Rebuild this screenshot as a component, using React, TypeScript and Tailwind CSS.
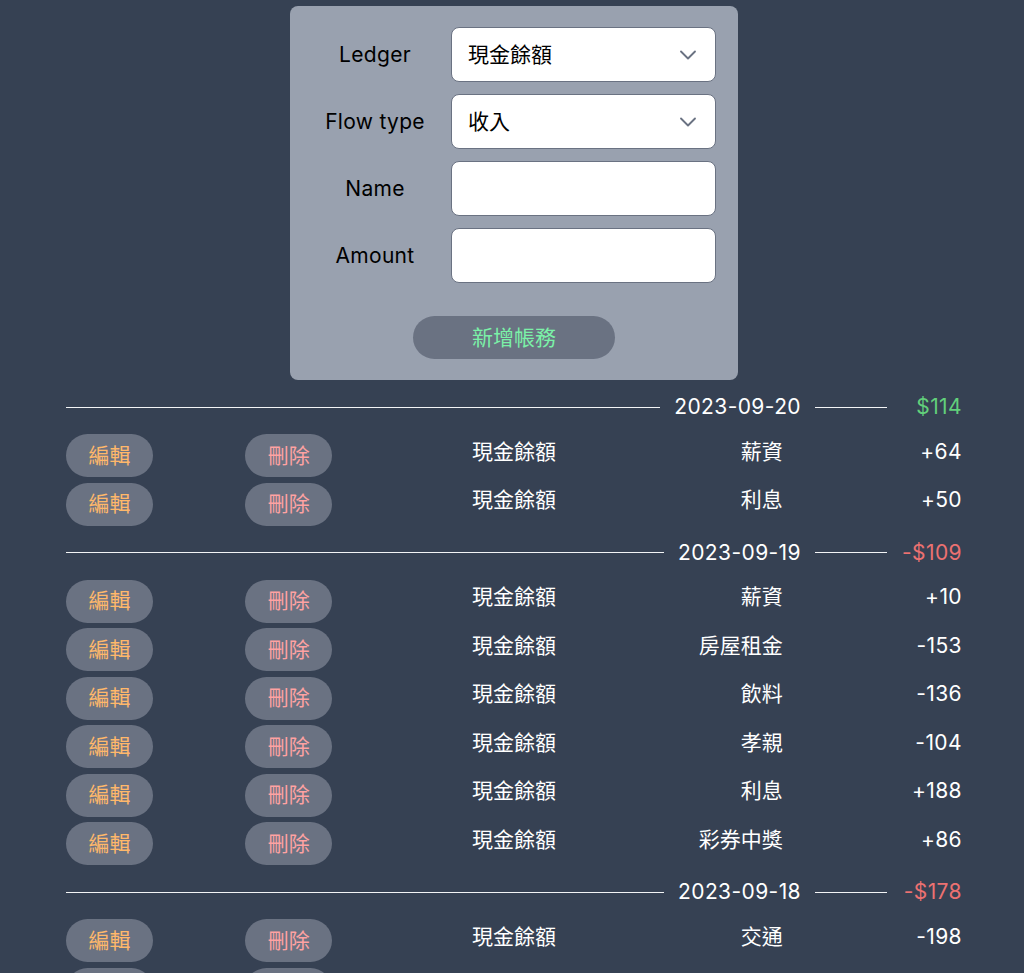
import { ChevronDown } from "lucide-react";

type Entry = { name: string; amount: number };
type Day = { date: string; entries: Entry[] };

const days: Day[] = [
  {
    date: "2023-09-20",
    entries: [
      { name: "薪資", amount: 64 },
      { name: "利息", amount: 50 },
    ],
  },
  {
    date: "2023-09-19",
    entries: [
      { name: "薪資", amount: 10 },
      { name: "房屋租金", amount: -153 },
      { name: "飲料", amount: -136 },
      { name: "孝親", amount: -104 },
      { name: "利息", amount: 188 },
      { name: "彩券中獎", amount: 86 },
    ],
  },
  {
    date: "2023-09-18",
    entries: [
      { name: "交通", amount: -198 },
      { name: "薪資", amount: 20 },
    ],
  },
];

function fmtTotal(n: number) {
  return n < 0 ? `-$${-n}` : `$${n}`;
}

function Select({ value }: { value: string }) {
  return (
    <div className="h-[55px] bg-white border border-gray-500 rounded-lg flex items-center justify-between pl-[16px] pr-[13px]">
      <span className="text-[21px] leading-7 text-black">{value}</span>
      <ChevronDown size={28} strokeWidth={1.6} className="text-gray-500" />
    </div>
  );
}

function Field({ label, children }: { label: string; children: React.ReactNode }) {
  return (
    <>
      <div className="text-[21px] leading-7 text-black text-center flex items-center justify-center h-[55px] tracking-[0.3px]">
        {label}
      </div>
      {children}
    </>
  );
}

export default function App() {
  return (
    <div className="min-h-screen bg-gray-700 pl-[66px] pr-[62px] pt-[6px] pb-10 font-[Inter,'Noto_Sans_CJK_TC',sans-serif]">
      {/* Form */}
      <div className="w-[448px] mx-auto bg-gray-400 rounded-lg pl-5 pr-[22px] pt-[21px] pb-[21px]">
        <div className="grid grid-cols-[130px_265px] gap-x-[11px] gap-y-3">
          <Field label="Ledger">
            <Select value="現金餘額" />
          </Field>
          <Field label="Flow type">
            <Select value="收入" />
          </Field>
          <Field label="Name">
            <input className="h-[55px] bg-white border border-gray-500 rounded-lg px-4 text-xl outline-none" />
          </Field>
          <Field label="Amount">
            <input className="h-[55px] bg-white border border-gray-500 rounded-lg px-4 text-xl outline-none" />
          </Field>
        </div>
        <div className="flex justify-center mt-[33px] pl-[2px]">
          <button className="w-[202px] h-[43px] rounded-full bg-gray-500 text-green-300 text-[21px] leading-7">
            新增帳務
          </button>
        </div>
      </div>

      {/* List */}
      {days.map((day) => {
        const total = day.entries.reduce((s, e) => s + e.amount, 0);
        return (
          <div key={day.date} className="mt-[13px]">
            <div className="flex items-center h-[28px] mb-[13px] text-[21px] leading-7 tracking-[0.4px]">
              <div className="flex-1 h-px bg-gray-100" />
              <span className="px-[14px] text-white">{day.date}</span>
              <div className="w-[72px] h-px bg-gray-100" />
              <span className={`w-[75px] text-right ${total < 0 ? "text-[#ec7171]" : "text-[#62d07b]"}`}>
                {fmtTotal(total)}
              </span>
            </div>
            <div className="flex flex-col gap-[5.5px]">
              {day.entries.map((e, i) => (
                <div key={i} className="grid grid-cols-5 items-center h-[43px] text-[21px] leading-7 text-white">
                  <div>
                    <button className="w-[87px] h-[43px] rounded-full bg-gray-500 text-orange-300">編輯</button>
                  </div>
                  <div>
                    <button className="w-[87px] h-[43px] rounded-full bg-gray-500 text-red-300">刪除</button>
                  </div>
                  <div className="text-center -mt-[8px]">現金餘額</div>
                  <div className="text-right -mt-[8px]">{e.name}</div>
                  <div className="text-right -mt-[8px] tracking-[0.4px]">
                    {e.amount > 0 ? `+${e.amount}` : e.amount}
                  </div>
                </div>
              ))}
            </div>
          </div>
        );
      })}
    </div>
  );
}
